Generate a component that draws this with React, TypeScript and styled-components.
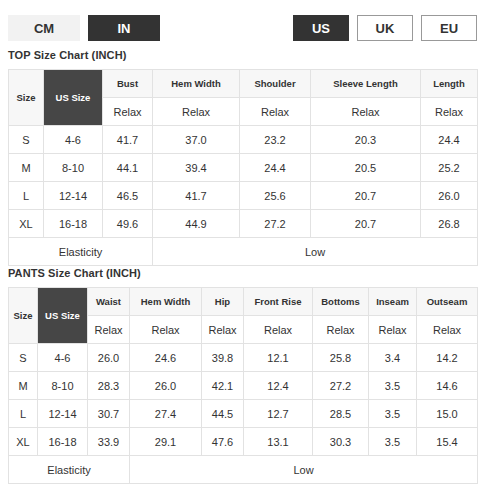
import React from "react";
import styled, { createGlobalStyle } from "styled-components";

const GlobalStyle = createGlobalStyle`
  body {
    margin: 0;
    background: #fff;
    font-family: "Liberation Sans", Arial, sans-serif;
    color: #333;
  }
`;

const Page = styled.div`
  padding: 15px 10px 10px 8px;
  width: 469px;
`;

const Toolbar = styled.div`
  display: flex;
  justify-content: space-between;
  height: 26px;
`;

const Group = styled.div<{ gap: number }>`
  display: flex;
  gap: ${p => p.gap}px;
`;

const Toggle = styled.button<{ active?: boolean; outlined?: boolean; w: number }>`
  width: ${p => p.w}px;
  height: 26px;
  padding: 0;
  font-family: "Liberation Sans", Arial, sans-serif;
  font-size: 13px;
  font-weight: bold;
  cursor: pointer;
  color: ${p => (p.active ? "#fff" : "#333")};
  background: ${p => (p.active ? "#333" : p.outlined ? "#fff" : "#f2f2f2")};
  border: ${p => (p.outlined ? "1px solid #999" : "none")};
`;

const Title = styled.h3<{ top: number }>`
  margin: ${p => p.top}px 0 7px;
  font-size: 11px;
  line-height: 14px;
  font-weight: bold;
  letter-spacing: 0.1px;
  color: #333;
`;

const Table = styled.table`
  width: 469px;
  table-layout: fixed;
  border-collapse: collapse;
  text-align: center;
  border: 1px solid #e2e2e2;
`;

const Row = styled.tr`
  height: 28px;
`;

const Head = styled.th<{ dark?: boolean }>`
  padding: 0;
  font-size: 9.5px;
  font-weight: bold;
  border: 1px solid #e2e2e2;
  background: ${p => (p.dark ? "#464646" : "#f7f7f7")};
  color: ${p => (p.dark ? "#fff" : "#333")};
`;

const Cell = styled.td`
  padding: 0;
  font-size: 11px;
  border: 1px solid #e2e2e2;
  background: #fff;
`;

type Chart = {
  title: string;
  widths: number[];
  cols: string[];
  rows: string[][];
  elasticSpan: number;
};

const charts: Chart[] = [
  {
    title: "TOP Size Chart (INCH)",
    widths: [35, 59, 50, 87, 71, 110, 57],
    cols: ["Bust", "Hem Width", "Shoulder", "Sleeve Length", "Length"],
    rows: [
      ["S", "4-6", "41.7", "37.0", "23.2", "20.3", "24.4"],
      ["M", "8-10", "44.1", "39.4", "24.4", "20.5", "25.2"],
      ["L", "12-14", "46.5", "41.7", "25.6", "20.7", "26.0"],
      ["XL", "16-18", "49.6", "44.9", "27.2", "20.7", "26.8"],
    ],
    elasticSpan: 3,
  },
  {
    title: "PANTS Size Chart (INCH)",
    widths: [29, 50, 42, 72, 42, 69, 56, 48, 61],
    cols: ["Waist", "Hem Width", "Hip", "Front Rise", "Bottoms", "Inseam", "Outseam"],
    rows: [
      ["S", "4-6", "26.0", "24.6", "39.8", "12.1", "25.8", "3.4", "14.2"],
      ["M", "8-10", "28.3", "26.0", "42.1", "12.4", "27.2", "3.5", "14.6"],
      ["L", "12-14", "30.7", "27.4", "44.5", "12.7", "28.5", "3.5", "15.0"],
      ["XL", "16-18", "33.9", "29.1", "47.6", "13.1", "30.3", "3.5", "15.4"],
    ],
    elasticSpan: 3,
  },
];

function SizeTable({ chart }: { chart: Chart }) {
  const total = chart.widths.length;
  return (
    <Table>
      <colgroup>
        {chart.widths.map((w, i) => (
          <col key={i} style={{ width: w }} />
        ))}
      </colgroup>
      <tbody>
        <Row>
          <Head rowSpan={2}>Size</Head>
          <Head rowSpan={2} dark>
            US Size
          </Head>
          {chart.cols.map(c => (
            <Head key={c}>{c}</Head>
          ))}
        </Row>
        <Row>
          {chart.cols.map(c => (
            <Cell key={c}>Relax</Cell>
          ))}
        </Row>
        {chart.rows.map(r => (
          <Row key={r[0]}>
            {r.map((v, i) => (
              <Cell key={i}>{v}</Cell>
            ))}
          </Row>
        ))}
        <Row>
          <Cell colSpan={chart.elasticSpan}>Elasticity</Cell>
          <Cell colSpan={total - chart.elasticSpan}>Low</Cell>
        </Row>
      </tbody>
    </Table>
  );
}

export default function App() {
  return (
    <>
      <GlobalStyle />
      <Page>
        <Toolbar>
          <Group gap={8}>
            <Toggle w={72}>CM</Toggle>
            <Toggle w={72} active>
              IN
            </Toggle>
          </Group>
          <Group gap={8}>
            <Toggle w={56} active>
              US
            </Toggle>
            <Toggle w={56} outlined>
              UK
            </Toggle>
            <Toggle w={56} outlined>
              EU
            </Toggle>
          </Group>
        </Toolbar>
        <Title top={7}>{charts[0].title}</Title>
        <SizeTable chart={charts[0]} />
        <Title top={0}>{charts[1].title}</Title>
        <SizeTable chart={charts[1]} />
      </Page>
    </>
  );
}
